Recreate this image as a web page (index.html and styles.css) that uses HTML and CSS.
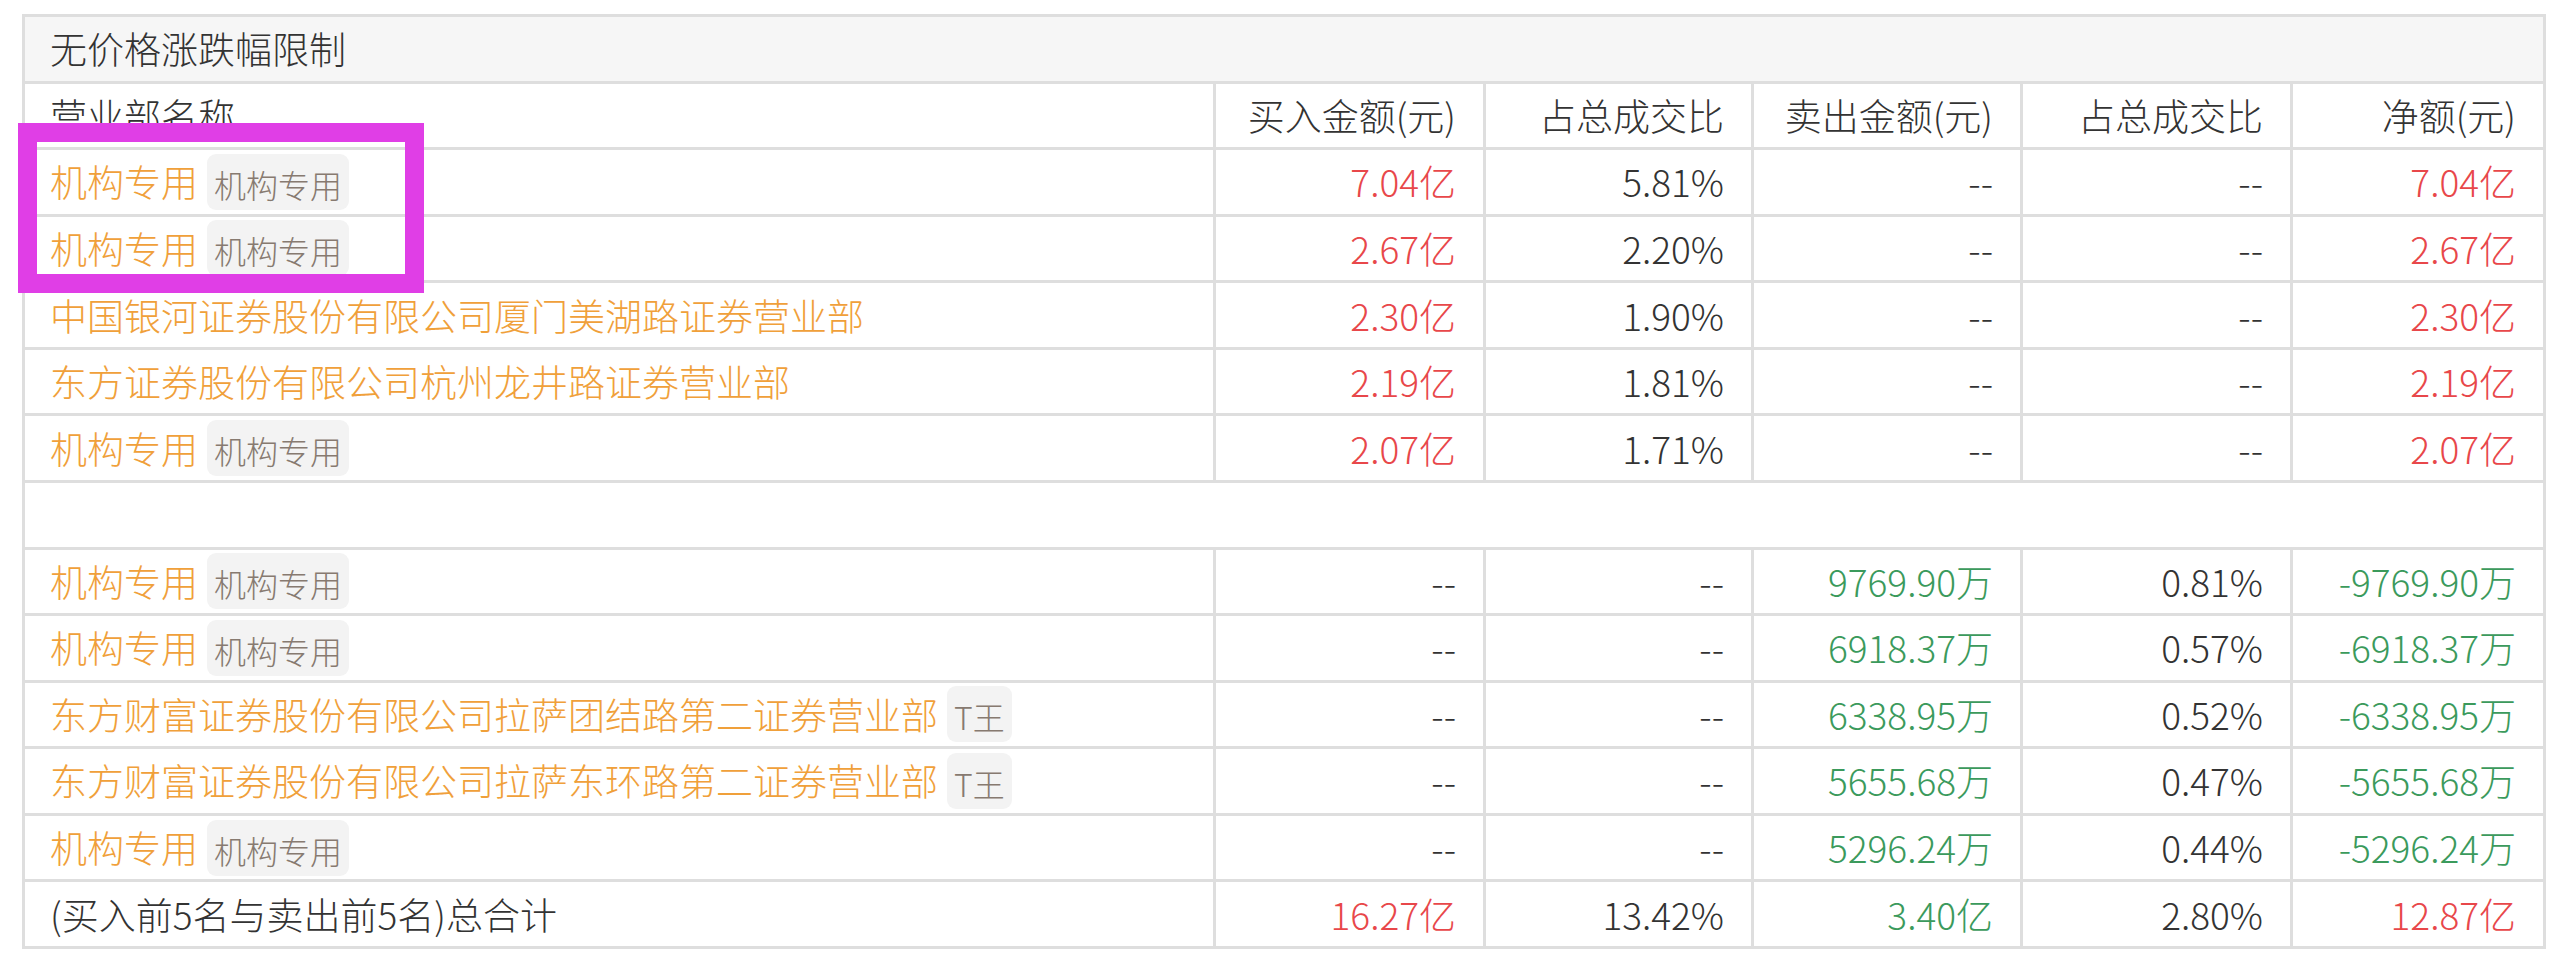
FILE: index.html
```html
<!DOCTYPE html>
<html lang="zh-CN">
<head>
<meta charset="utf-8">
<title>龙虎榜</title>
<link rel="stylesheet" href="styles.css">
</head>
<body>
<div class="page">
  <div class="tbl">
    <div class="row full title"><div class="cell">无价格涨跌幅限制</div></div>
    <div class="row head">
      <div class="cell name">营业部名称</div>
      <div class="cell num">买入金额(元)</div>
      <div class="cell num">占总成交比</div>
      <div class="cell num">卖出金额(元)</div>
      <div class="cell num">占总成交比</div>
      <div class="cell num">净额(元)</div>
    </div>

    <div class="row">
      <div class="cell name"><span class="org">机构专用</span><span class="tag">机构专用</span></div>
      <div class="cell num red">7.04亿</div>
      <div class="cell num">5.81%</div>
      <div class="cell num">--</div>
      <div class="cell num">--</div>
      <div class="cell num red">7.04亿</div>
    </div>
    <div class="row">
      <div class="cell name"><span class="org">机构专用</span><span class="tag">机构专用</span></div>
      <div class="cell num red">2.67亿</div>
      <div class="cell num">2.20%</div>
      <div class="cell num">--</div>
      <div class="cell num">--</div>
      <div class="cell num red">2.67亿</div>
    </div>
    <div class="row">
      <div class="cell name"><span class="org">中国银河证券股份有限公司厦门美湖路证券营业部</span></div>
      <div class="cell num red">2.30亿</div>
      <div class="cell num">1.90%</div>
      <div class="cell num">--</div>
      <div class="cell num">--</div>
      <div class="cell num red">2.30亿</div>
    </div>
    <div class="row">
      <div class="cell name"><span class="org">东方证券股份有限公司杭州龙井路证券营业部</span></div>
      <div class="cell num red">2.19亿</div>
      <div class="cell num">1.81%</div>
      <div class="cell num">--</div>
      <div class="cell num">--</div>
      <div class="cell num red">2.19亿</div>
    </div>
    <div class="row">
      <div class="cell name"><span class="org">机构专用</span><span class="tag">机构专用</span></div>
      <div class="cell num red">2.07亿</div>
      <div class="cell num">1.71%</div>
      <div class="cell num">--</div>
      <div class="cell num">--</div>
      <div class="cell num red">2.07亿</div>
    </div>

    <div class="row full blank"><div class="cell"></div></div>

    <div class="row">
      <div class="cell name"><span class="org">机构专用</span><span class="tag">机构专用</span></div>
      <div class="cell num">--</div>
      <div class="cell num">--</div>
      <div class="cell num green">9769.90万</div>
      <div class="cell num">0.81%</div>
      <div class="cell num green">-9769.90万</div>
    </div>
    <div class="row">
      <div class="cell name"><span class="org">机构专用</span><span class="tag">机构专用</span></div>
      <div class="cell num">--</div>
      <div class="cell num">--</div>
      <div class="cell num green">6918.37万</div>
      <div class="cell num">0.57%</div>
      <div class="cell num green">-6918.37万</div>
    </div>
    <div class="row">
      <div class="cell name"><span class="org">东方财富证券股份有限公司拉萨团结路第二证券营业部</span><span class="tag">T王</span></div>
      <div class="cell num">--</div>
      <div class="cell num">--</div>
      <div class="cell num green">6338.95万</div>
      <div class="cell num">0.52%</div>
      <div class="cell num green">-6338.95万</div>
    </div>
    <div class="row">
      <div class="cell name"><span class="org">东方财富证券股份有限公司拉萨东环路第二证券营业部</span><span class="tag">T王</span></div>
      <div class="cell num">--</div>
      <div class="cell num">--</div>
      <div class="cell num green">5655.68万</div>
      <div class="cell num">0.47%</div>
      <div class="cell num green">-5655.68万</div>
    </div>
    <div class="row">
      <div class="cell name"><span class="org">机构专用</span><span class="tag">机构专用</span></div>
      <div class="cell num">--</div>
      <div class="cell num">--</div>
      <div class="cell num green">5296.24万</div>
      <div class="cell num">0.44%</div>
      <div class="cell num green">-5296.24万</div>
    </div>

    <div class="row total">
      <div class="cell name">(买入前5名与卖出前5名)总合计</div>
      <div class="cell num red">16.27亿</div>
      <div class="cell num">13.42%</div>
      <div class="cell num green">3.40亿</div>
      <div class="cell num">2.80%</div>
      <div class="cell num red">12.87亿</div>
    </div>
  </div>
  <div class="mark"></div>
</div>
</body>
</html>
```

FILE: styles.css
```css
html, body {
  margin: 0;
  padding: 0;
  background: #ffffff;
}

body {
  font-family: "Noto Sans CJK SC", "Noto Sans", sans-serif;
  font-weight: 300;
  color: #333333;
  font-size: 37px;
}

.page {
  position: relative;
  width: 2560px;
  height: 956px;
  padding: 14px 0 0 22px;
  box-sizing: border-box;
}

.tbl {
  width: 2524px;
  box-sizing: border-box;
  border: 3px solid #dedede;
  border-bottom: none;
}

.row {
  display: grid;
  grid-template-columns: 1188px 270px 268px 269px 270px 253px;
  height: 66.571px;
  box-sizing: border-box;
  border-bottom: 3px solid #dedede;
}

.row.full {
  grid-template-columns: 1fr;
}

.title {
  background: #f6f6f6;
}

.cell {
  display: flex;
  align-items: center;
  padding: 0 27px 0 25px;
  white-space: nowrap;
  line-height: 1;
  overflow: hidden;
}

.cell + .cell {
  border-left: 3px solid #dedede;
}

.num {
  justify-content: flex-end;
}

.org {
  color: #f0a03a;
}

.tag {
  display: inline-block;
  margin-left: 9px;
  padding: 0 7px;
  height: 56px;
  line-height: 60px;
  font-size: 32px;
  color: #877a70;
  background: #f3f3f3;
  border-radius: 9px;
}

.red {
  color: #e8474a;
}

.green {
  color: #3b9a5c;
}

.mark {
  position: absolute;
  left: 18px;
  top: 123px;
  width: 406px;
  height: 170px;
  box-sizing: border-box;
  border: 19px solid #e03ee6;
}
```
